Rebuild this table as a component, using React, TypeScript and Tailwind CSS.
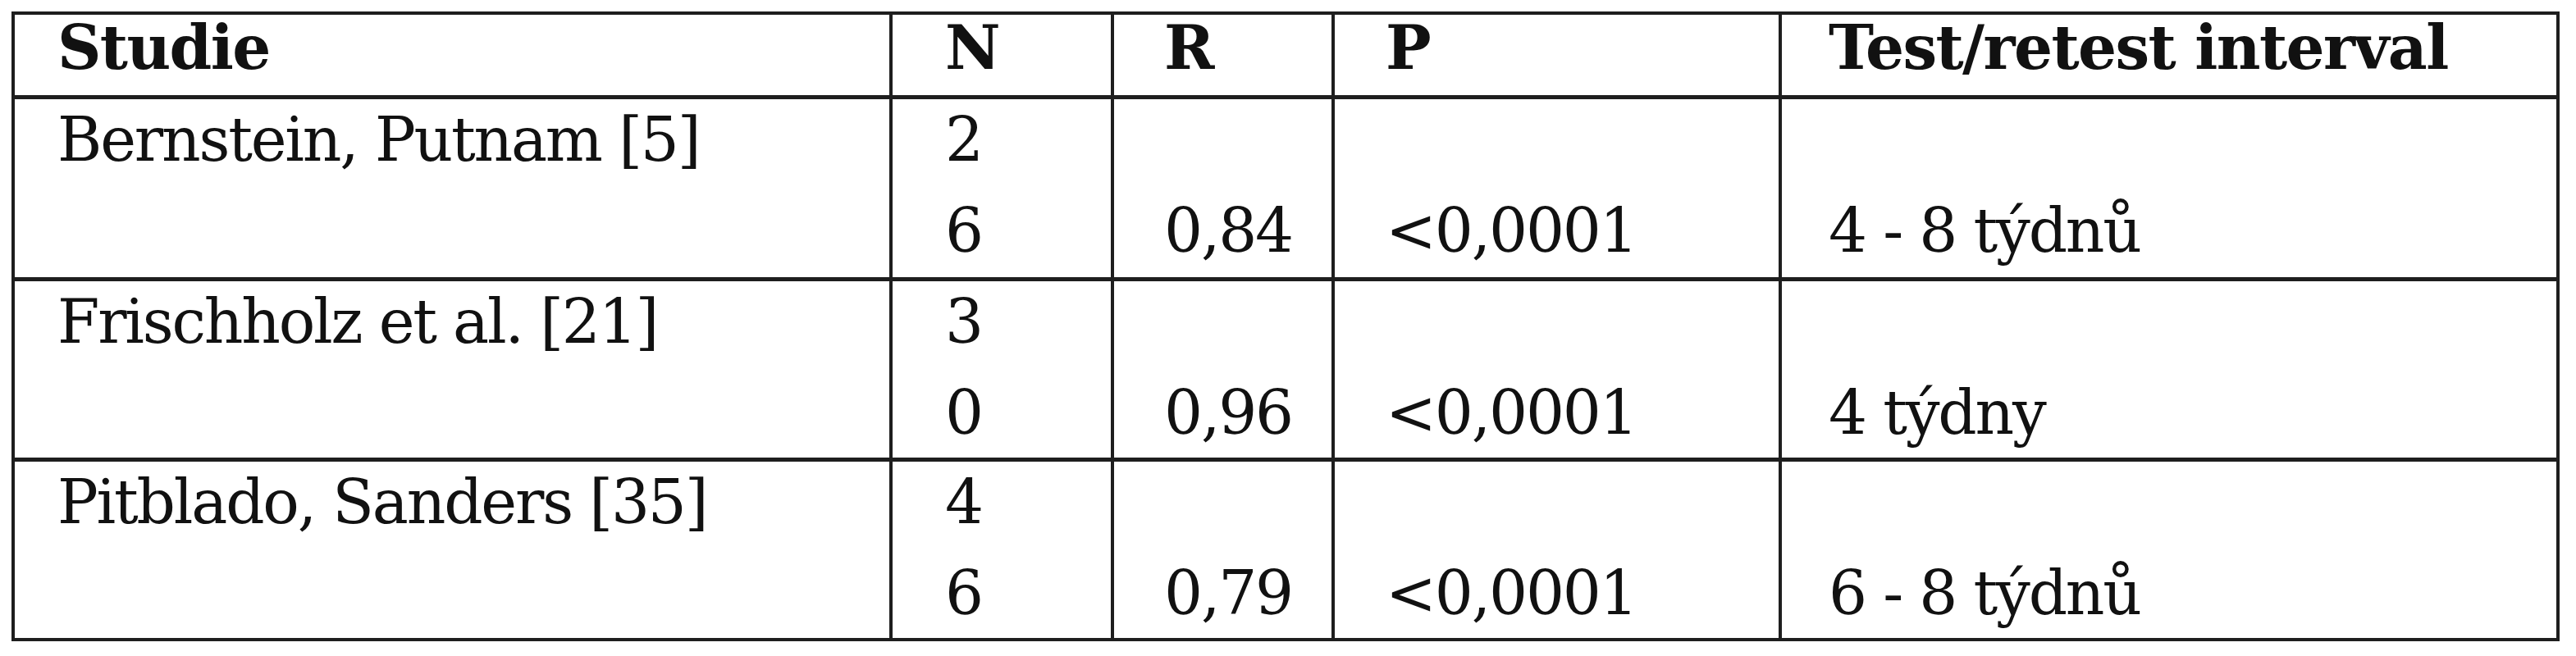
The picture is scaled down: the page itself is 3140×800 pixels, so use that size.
const rows = [
  { studie: 'Bernstein, Putnam [5]', n1: '2', n2: '6', r: '0,84', p: '<0,0001', interval: '4 - 8 týdnů' },
  { studie: 'Frischholz et al. [21]', n1: '3', n2: '0', r: '0,96', p: '<0,0001', interval: '4 týdny' },
  { studie: 'Pitblado, Sanders [35]', n1: '4', n2: '6', r: '0,79', p: '<0,0001', interval: '6 - 8 týdnů' },
];

const pads = ['pl-[52px]', 'pl-[64px]', 'pl-[61px]', 'pl-[62px]', 'pl-[57px]'];

const Line = ({ children, second }: { children?: string; second?: boolean }) => (
  <div className={`h-[98px] leading-[98px] whitespace-nowrap ${second ? 'mt-[13px]' : ''}`}>{children ?? '\u00a0'}</div>
);

export default function App() {
  const headers = ['Studie', 'N', 'R', 'P', 'Test/retest interval'];

  return (
    <div className="w-[3140px] h-[800px] bg-white pt-[14px] pl-[14px]">
      <div
        className="w-[3106px] border-4 border-[#1e1e1e] text-[#111] text-[74px] tracking-[-2.2px]"
        style={{ fontFamily: '"DejaVu Serif", "Liberation Serif", serif' }}
      >
        <div className="grid grid-cols-[1070px_270px_269px_545px_944px]">
          {headers.map((h, i) => (
            <div
              key={h}
              className={`h-[103px] border-b-[5px] border-[#1e1e1e] font-bold leading-[80px] tracking-[-1.6px] ${pads[i]} ${i < 4 ? 'border-r-4' : ''}`}
            >
              {h}
            </div>
          ))}

          {rows.map((row, ri) => {
            const last = ri === rows.length - 1;
            const h = ri === 0 ? 'h-[222px]' : last ? 'h-[215px]' : 'h-[220px]';
            const cells = [
              [row.studie, undefined],
              [row.n1, row.n2],
              [undefined, row.r],
              [undefined, row.p],
              [undefined, row.interval],
            ];
            return cells.map(([a, b], ci) => (
              <div
                key={`${ri}-${ci}`}
                className={`${h} border-[#1e1e1e] ${pads[ci]} ${ci < 4 ? 'border-r-4' : ''} ${last ? '' : 'border-b-[5px]'}`}
              >
                <Line>{a}</Line>
                <Line second>{b}</Line>
              </div>
            ));
          })}
        </div>
      </div>
    </div>
  );
}
